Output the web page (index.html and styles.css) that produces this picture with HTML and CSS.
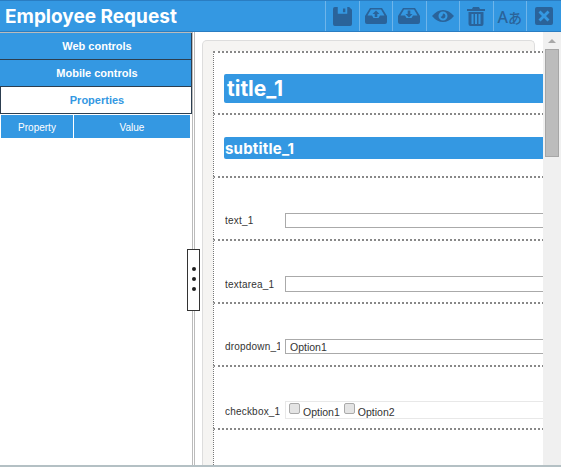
FILE: index.html
```html
<!DOCTYPE html>
<html lang="en">
<head>
    <meta charset="UTF-8">
    <meta name="viewport" content="width=device-width, initial-scale=1.0">
    <title>Employee Request</title>
    <link rel="stylesheet" href="styles.css">
</head>
<body>
    <!-- Top bar -->
    <header class="topbar">
        <h1 class="app-title">Employee Request</h1>
        <div class="toolbar">
            <div class="tool">
                <svg width="19" height="19" viewBox="0 0 20 20"><path class="icon" fill-rule="evenodd" d="M2 0H17L20 3V18Q20 20 18 20H2Q0 20 0 18V2Q0 0 2 0ZM5 0V7H15V0ZM10.5 1.500H13V5.500H10.500Z"/></svg>
            </div>
            <div class="tool">
                <svg width="22" height="16" viewBox="0 0 22 16"><path class="icon" fill-rule="evenodd" d="M5 0H17L22 8V14Q22 16 20 16H2Q0 16 0 14V8ZM6 1.500L2.500 7.500H7L8.500 10H13.500L15 7.500H19.500L16 1.500ZM11 2.500L14.500 6H12.300V9H9.700V6H7.500Z"/></svg>
            </div>
            <div class="tool">
                <svg width="22" height="16" viewBox="0 0 22 16"><path class="icon" fill-rule="evenodd" d="M5 0H17L22 8V14Q22 16 20 16H2Q0 16 0 14V8ZM6 1.500L2.500 7.500H7L8.500 10H13.500L15 7.500H19.500L16 1.500ZM11 9.500L7.500 6H9.700V2.500H12.300V6H14.500Z"/></svg>
            </div>
            <div class="tool">
                <svg width="22" height="12" viewBox="0 0 22 12"><path class="icon" fill-rule="evenodd" d="M0 6Q5 0 11 0T22 6Q17 12 11 12T0 6ZM11 1.500A4.500 4.500 0 1 0 11 10.500A4.500 4.500 0 1 0 11 1.500ZM11 3.500A2.500 2.500 0 1 1 8.600 6.800Q10.500 7 11 3.500Z"/></svg>
            </div>
            <div class="tool">
                <svg width="18" height="19" viewBox="0 0 18 19"><path class="icon" fill-rule="evenodd" d="M6 0H12L13 2H18V4H0V2H5ZM1.500 5H16.500V17Q16.500 19 14.500 19H3.500Q1.500 19 1.500 17ZM4.500 7V17H6.500V7ZM8 7V17H10V7ZM11.500 7V17H13.500V7Z"/></svg>
            </div>
            <div class="tool tool-text"><span class="glyph-a">A</span><span class="glyph-kana">あ</span></div>
            <div class="tool tool-last">
                <svg width="18" height="18" viewBox="0 0 18 18"><path class="icon" fill-rule="evenodd" d="M2 0H16Q18 0 18 2V16Q18 18 16 18H2Q0 18 0 16V2Q0 0 2 0ZM5.500 3.500L3.500 5.500L7 9L3.500 12.500L5.500 14.500L9 11L12.500 14.500L14.500 12.500L11 9L14.500 5.500L12.500 3.500L9 7Z"/></svg>
            </div>
        </div>
    </header>

    <div class="workspace">
        <!-- Left panel -->
        <aside class="side">
            <div class="side-tab">Web controls</div>
            <div class="side-tab">Mobile controls</div>
            <div class="side-tab side-tab-active">Properties</div>
            <div class="prop-head">
                <div class="prop-col prop-col-name">Property</div>
                <div class="prop-col prop-col-value">Value</div>
            </div>
        </aside>

        <div class="divider"></div>

        <!-- Form designer -->
        <main class="canvas">
            <div class="sheet">
                <div class="form-row row-title">
                    <div class="title-bar">title_1</div>
                </div>
                <div class="form-row row-subtitle">
                    <div class="subtitle-bar">subtitle_1</div>
                </div>
                <div class="form-row">
                    <label class="field-label">text_1</label>
                    <div class="field-box"></div>
                </div>
                <div class="form-row row-textarea">
                    <label class="field-label">textarea_1</label>
                    <div class="field-box field-tall"></div>
                </div>
                <div class="form-row">
                    <label class="field-label">dropdown_1</label>
                    <div class="field-box field-select">Option1</div>
                </div>
                <div class="form-row row-checks">
                    <label class="field-label">checkbox_1</label>
                    <div class="field-checks">
                        <span class="check"></span><span class="check-text">Option1</span>
                        <span class="check"></span><span class="check-text">Option2</span>
                    </div>
                </div>
                <div class="form-row row-empty"></div>
            </div>
        </main>

        <div class="scrollbar">
            <div class="scroll-arrow"></div>
            <div class="scroll-thumb"></div>
        </div>

        <div class="handle"><i></i><i></i><i></i></div>
    </div>

    <div class="bottom-edge"></div>
</body>
</html>
```

FILE: styles.css
```css
html, body {
    height: 100%;
}
body {
    margin: 0;
    display: flex;
    flex-direction: column;
    overflow: hidden;
    font-family: "Liberation Sans", Arial, sans-serif;
    background-color: #fff;
    color: #333;
}

/* Top bar */
.topbar {
    height: 30px;
    flex: none;
    display: flex;
    justify-content: space-between;
    background-color: #3498e2;
    border-top: 1px solid #2a7dc2;
    border-bottom: 1px solid #2a7dc2;
}
.app-title {
    margin: 0 0 0 5px;
    font-family: Inter, sans-serif;
    font-size: 19px;
    font-weight: 700;
    line-height: 31px;
    color: #fff;
}
.toolbar {
    display: flex;
}
.tool {
    width: 33.500px;
    box-sizing: border-box;
    display: flex;
    align-items: center;
    justify-content: center;
    border-left: 1px solid #6fb5ea;
}
.tool-last {
    width: 35px;
}
.icon {
    fill: #2a639a;
}
.tool-text {
    color: #2a639a;
    align-items: baseline;
    line-height: 32px;
}
.glyph-a {
    font-family: "Noto Sans", sans-serif;
    font-size: 16px;
    font-weight: 500;
}
.glyph-kana {
    font-family: "Noto Sans CJK JP", sans-serif;
    font-size: 14px;
    font-weight: 500;
    margin-bottom: 2px;
}

/* Main area */
.workspace {
    flex: 1;
    position: relative;
    display: flex;
    min-height: 0;
}
.side {
    width: 192px;
    flex: none;
    box-sizing: border-box;
    border-top: 1px solid #bbb;
    display: flex;
    flex-direction: column;
    align-items: flex-start;
}
.side-tab {
    height: 26px;
    padding-left: 3px;
    width: 188px;
    background-color: #3498e2;
    border-right: 1px solid #2c3e50;
    border-bottom: 1px solid #2c3e50;
    font-size: 11px;
    font-weight: 700;
    line-height: 27px;
    text-align: center;
    color: #fff;
}
.side-tab-active {
    background-color: #fff;
    color: #3498e2;
    border-left: 1px solid #2c3e50;
    padding-left: 2px;
}
.prop-head {
    display: flex;
    gap: 1px;
    margin: 1px 0 0 1px;
}
.prop-col {
    height: 23px;
    background-color: #3498e2;
    color: #fff;
    font-size: 10px;
    line-height: 25px;
    text-align: center;
}
.prop-col-name {
    width: 72px;
}
.prop-col-value {
    width: 116px;
}
.divider {
    width: 3px;
    flex: none;
    border-left: 1px solid #bbb;
    border-right: 1px solid #bbb;
    box-sizing: border-box;
}

/* Form designer */
.canvas {
    flex: 1;
    min-width: 0;
    overflow: hidden;
    padding: 8px 0 0 7px;
}
.sheet {
    height: 100%;
    width: 333px;
    box-sizing: border-box;
    padding: 10px 0 0 10px;
    background-color: #f5f4f2;
    border: 1px solid #ddd;
    border-bottom: none;
    border-radius: 5px 5px 0 0;
}
.form-row {
    width: 330px;
    height: 50px;
    display: flex;
    align-items: flex-end;
    background-color: #fff;
    border-left: 1px dotted #777;
    border-top: 2px dotted #888;
    padding-bottom: 11px;
    font-size: 10px;
}
.row-title {
    height: 50px;
    padding-bottom: 10px;
}
.row-subtitle {
    height: 44px;
    padding-bottom: 17px;
}
.row-textarea {
    height: 51px;
    padding-bottom: 10px;
}
.row-checks {
    height: 52px;
    padding-bottom: 9px;
}
.row-empty {
    height: 60px;
}
.field-label {
    width: 55px;
    margin: 0 5px 2px 11px;
    letter-spacing: 0.200px;
    overflow: hidden;
    white-space: nowrap;
    flex: none;
}
.title-bar {
    flex: 1;
    height: 29px;
    margin-left: 10px;
    background-color: #3498e2;
    border-radius: 2px 0 0 2px;
    color: #fff;
    font-family: Inter, sans-serif;
    font-size: 21px;
    font-weight: 700;
    line-height: 29px;
    padding-left: 3px;
}
.subtitle-bar {
    flex: 1;
    height: 22px;
    margin-left: 10px;
    background-color: #3498e2;
    border-radius: 2px 0 0 2px;
    color: #fff;
    font-family: Inter, sans-serif;
    font-size: 15px;
    font-weight: 700;
    line-height: 23px;
    padding-left: 1px;
    letter-spacing: 0.200px;
}
.field-box {
    flex: 1;
    height: 13px;
    background-color: #fff;
    border: 1px solid #aaa;
    padding-left: 4px;
    font-size: 10px;
    line-height: 14px;
}
.field-tall {
    height: 14px;
}
.field-select {
    font-size: 10.500px;
}
.field-checks {
    flex: 1;
    height: 16px;
    display: flex;
    align-items: center;
    gap: 3px;
    padding-left: 3px;
    border: 1px solid #e8e8e8;
}
.check {
    width: 9px;
    height: 9px;
    background-color: #e4e4e4;
    border: 1px solid #aaa;
    border-radius: 2px;
    margin-top: -3px;
}
.check-text {
    margin: 3px 1px 0 0;
    font-size: 10.500px;
}

/* Fake scrollbar, the page itself does not scroll */
.scrollbar {
    width: 18px;
    flex: none;
    box-sizing: border-box;
    padding: 7px 2px 0 2px;
    background-color: #f0f0f0;
}
.scroll-arrow {
    width: 0;
    height: 0;
    margin: 0 auto 6px;
    border-left: 4px solid transparent;
    border-right: 4px solid transparent;
    border-bottom: 4px solid #a8a8a8;
}
.scroll-thumb {
    height: 106px;
    background-color: #bcbcbc;
    border: 1px solid #a6a6a6;
}

/* Splitter grip, sits over the divider */
.handle {
    position: absolute;
    left: 187px;
    top: 217px;
    width: 11px;
    height: 58px;
    padding-bottom: 2px;
    display: flex;
    flex-direction: column;
    align-items: center;
    justify-content: center;
    gap: 6px;
    background-color: #fff;
    border: 1px solid #333;
}
.handle i {
    width: 4px;
    height: 4px;
    border-radius: 50%;
    background-color: #222;
}
.bottom-edge {
    height: 2px;
    flex: none;
    background-color: #b4c0c4;
}
```
